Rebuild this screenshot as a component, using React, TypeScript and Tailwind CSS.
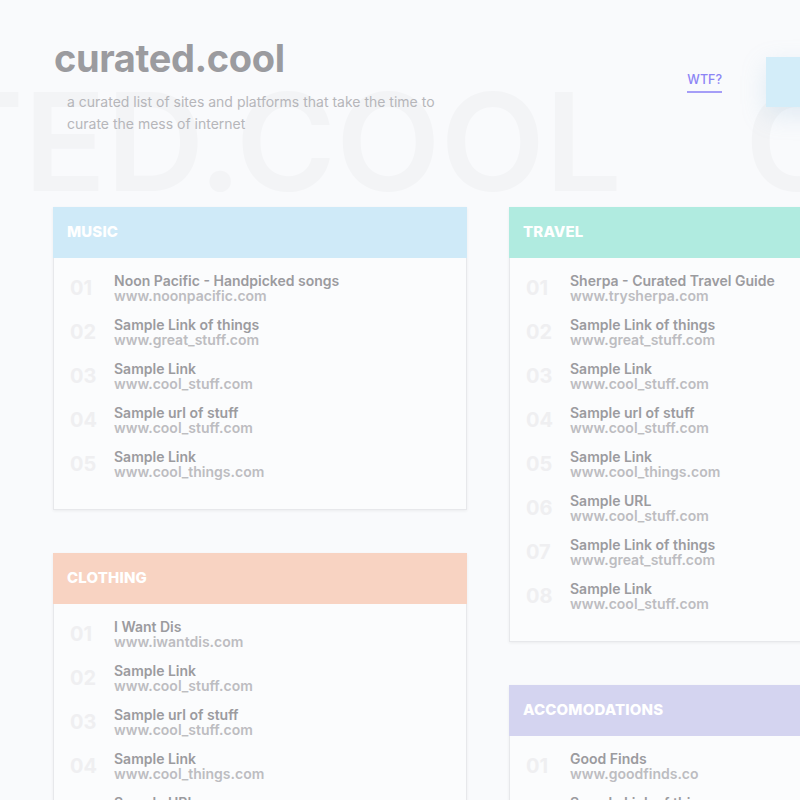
import React from "react";

type Item = { title: string; url: string };
type Section = { name: string; header: string; items: Item[] };

const music: Section = {
  name: "Music",
  header: "bg-[#cfeaf8]",
  items: [
    { title: "Noon Pacific - Handpicked songs", url: "www.noonpacific.com" },
    { title: "Sample Link of things", url: "www.great_stuff.com" },
    { title: "Sample Link", url: "www.cool_stuff.com" },
    { title: "Sample url of stuff", url: "www.cool_stuff.com" },
    { title: "Sample Link", url: "www.cool_things.com" },
  ],
};

const clothing: Section = {
  name: "Clothing",
  header: "bg-[#f8d3c2]",
  items: [
    { title: "I Want Dis", url: "www.iwantdis.com" },
    { title: "Sample Link", url: "www.cool_stuff.com" },
    { title: "Sample url of stuff", url: "www.cool_stuff.com" },
    { title: "Sample Link", url: "www.cool_things.com" },
    { title: "Sample URL", url: "www.cool_stuff.com" },
  ],
};

const travel: Section = {
  name: "Travel",
  header: "bg-[#b0ebe0]",
  items: [
    { title: "Sherpa - Curated Travel Guide", url: "www.trysherpa.com" },
    { title: "Sample Link of things", url: "www.great_stuff.com" },
    { title: "Sample Link", url: "www.cool_stuff.com" },
    { title: "Sample url of stuff", url: "www.cool_stuff.com" },
    { title: "Sample Link", url: "www.cool_things.com" },
    { title: "Sample URL", url: "www.cool_stuff.com" },
    { title: "Sample Link of things", url: "www.great_stuff.com" },
    { title: "Sample Link", url: "www.cool_stuff.com" },
  ],
};

const accomodations: Section = {
  name: "Accomodations",
  header: "bg-[#d4d4f0]",
  items: [
    { title: "Good Finds", url: "www.goodfinds.co" },
    { title: "Sample Link of things", url: "www.great_stuff.com" },
    { title: "Sample Link", url: "www.cool_stuff.com" },
  ],
};

function Card({ section }: { section: Section }) {
  return (
    <div className="w-[414px] shadow-[0_1px_3px_rgba(0,0,0,0.06)]">
      <div className={`${section.header} flex h-[51px] items-center px-[14px]`}>
        <h2 className="text-[15px] font-extrabold uppercase tracking-[0.01em] text-white">{section.name}</h2>
      </div>
      <ul className="flex flex-col gap-[14px] border border-t-0 border-[#e7e8eb] bg-[#fbfcfd] pb-[30px] pt-[15px]">
        {section.items.map((item, i) => (
          <li key={i} className="flex items-center">
            <span className="w-[60px] pl-[16px] text-[20px] font-bold leading-none text-[#efeff1]">
              {String(i + 1).padStart(2, "0")}
            </span>
            <div className="flex flex-col">
              <span className="text-[14px] font-semibold leading-[15px] text-[#9b9b9f]">{item.title}</span>
              <span className="text-[14px] font-semibold leading-[15px] text-[#bdbdc1]">{item.url}</span>
            </div>
          </li>
        ))}
      </ul>
    </div>
  );
}

export default function App() {
  return (
    <div
      className="relative h-[800px] w-[800px] overflow-hidden bg-[#f9fafc]"
      style={{ fontFamily: "Inter, 'Noto Sans', sans-serif" }}
    >
      {/* faint marquee watermark */}
      <div className="pointer-events-none absolute left-[-442px] top-[60px] flex select-none whitespace-nowrap text-[136px] font-semibold leading-[1.2] text-[#f3f4f6]">
        <span>CURATED.COOL</span>
        <span className="ml-[123px]">CURATED.COOL</span>
      </div>

      <div className="relative w-[1000px]">
        <header className="flex items-start justify-between pl-[54px] pt-[36px]">
          <div>
            <h1 className="text-[38px] font-bold leading-[44px] tracking-[-0.01em] text-[#9b9b9f]">curated.cool</h1>
            <p className="ml-[13px] mt-[11px] w-[390px] text-[14px] leading-[22px] text-[#b6b6ba]">
              a curated list of sites and platforms that take the time to curate the mess of internet
            </p>
          </div>
          <div className="mr-[114px] mt-[21px] flex items-center gap-[44px]">
            <a className="border-b-2 border-[#a59df7] pb-[2px] text-[12.5px] font-medium leading-[18px] text-[#8c84f5]">
              WTF?
            </a>
            <button
              type="button"
              className="h-[50px] w-[120px] bg-[#d3edf9] text-[14px] font-medium text-white shadow-[0_8px_24px_rgba(150,190,220,0.25)]"
            >
              Submit
            </button>
          </div>
        </header>

        <main className="mt-[72px] flex items-start gap-[42px] pl-[53px]">
          <div className="flex flex-col gap-[43px]">
            <Card section={music} />
            <Card section={clothing} />
          </div>
          <div className="flex flex-col gap-[43px]">
            <Card section={travel} />
            <Card section={accomodations} />
          </div>
        </main>
      </div>
    </div>
  );
}
